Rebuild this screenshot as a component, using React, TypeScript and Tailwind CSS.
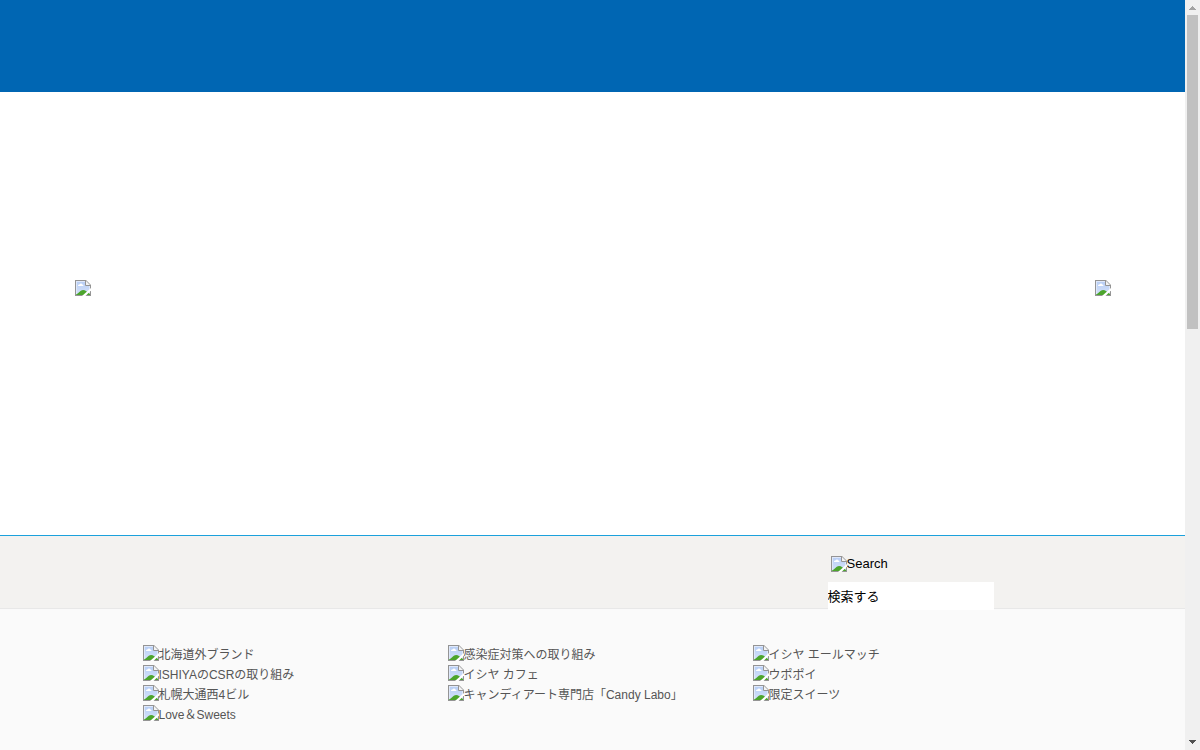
import React from "react";

const columns: string[][] = [
  ["北海道外ブランド", "ISHIYAのCSRの取り組み", "札幌大通西4ビル", "Love＆Sweets"],
  ["感染症対策への取り組み", "イシヤ カフェ", "キャンディアート専門店「Candy Labo」"],
  ["イシヤ エールマッチ", "ウポポイ", "限定スイーツ"],
];

function ImagePlaceholder() {
  return (
    <svg className="size-4 shrink-0" viewBox="0 0 16 16" aria-hidden="true">
      <defs>
        <linearGradient id="sky" x1="0" y1="0" x2="0" y2="1">
          <stop offset="0" stopColor="#b9cff5" />
          <stop offset="1" stopColor="#d3e1fa" />
        </linearGradient>
      </defs>
      <path d="M0 0H11L16 5V16H0Z" fill="#949494" />
      <path d="M1 1H10.5L15 5.5V15H1Z" fill="#dfe8fa" />
      <path d="M2 2H10V6H14V14H2Z" fill="url(#sky)" />
      <path d="M3 6C3 5 3.500 4.500 4.500 4.500C5 3 7 3 7.200 4.500C8 4.500 8.500 5.200 8.500 6Z" fill="#fff" />
      <path d="M1 15V14.500C4 13 5.500 10 8 10C10.500 10 12 12 15 14V15Z" fill="#4ca52c" />
      <path d="M10.500 0.500V5.500H15.500" fill="none" stroke="#949494" />
      <path d="M11 1L15 5H11Z" fill="#f4f4f4" />
      <path d="M16 8V10.500L10.500 16H7Z" fill="#fff" />
    </svg>
  );
}

function ScrollBar() {
  return (
    <div className="sticky top-0 flex h-screen w-[15px] shrink-0 flex-col items-center bg-[#f0f0f0]" aria-hidden="true">
      <svg className="h-[15px] w-[15px] shrink-0" viewBox="0 0 15 15" shapeRendering="crispEdges">
        <path d="M7 6h1v1h1v1h1v1h1v1H4V9h1V8h1V7h1Z" fill="#a3a3a3" />
      </svg>
      <div className="flex w-full flex-1 flex-col px-0.5">
        <div className="h-[314px] w-[11px] bg-[#c1c1c1]" />
      </div>
      <svg className="h-[15px] w-[15px] shrink-0" viewBox="0 0 15 15" shapeRendering="crispEdges">
        <path d="M4 5h7v1h-1v1h-1v1h-1v1h-1v-1h-1v-1h-1v-1h-1Z" fill="#505050" />
      </svg>
    </div>
  );
}

export default function App() {
  return (
    <div className="flex min-h-screen bg-white font-['Liberation_Sans','Noto_Sans_CJK_JP',sans-serif]">
      <div className="flex min-w-0 flex-1 flex-col">
        <header className="h-[92px] bg-[#0066b3]" />

        <section className="flex h-[443px] justify-center px-4 pt-[188px]">
          <div className="flex w-full max-w-[1036px] items-start justify-between">
            <button type="button" aria-label="Previous">
              <ImagePlaceholder />
            </button>
            <button type="button" aria-label="Next">
              <ImagePlaceholder />
            </button>
          </div>
        </section>

        <section className="h-[74px] border-t border-b border-t-[#1ba1dc] border-b-[#e8e8e8] bg-[#f3f2f0]">
          <form
            className="mx-auto flex w-full max-w-[900px] flex-col items-end pt-5 pr-[49px]"
            onSubmit={(e) => e.preventDefault()}
          >
            <div className="flex w-[166px] flex-col gap-2.5">
              <button type="submit" className="ml-[3px] flex h-4 items-center text-[13px] leading-4 text-black">
                <ImagePlaceholder />
                Search
              </button>
              <input
                type="text"
                aria-label="検索"
                defaultValue="検索する"
                className="relative h-7 w-full bg-white pb-0.5 text-[13px] text-black outline-none"
              />
            </div>
          </form>
        </section>

        <footer className="flex-1 bg-[#fafafa] pt-9">
          <div className="mx-auto grid max-w-[900px] grid-cols-[290px_290px_290px] gap-x-[15px]">
            {columns.map((items) => (
              <ul key={items[0]}>
                {items.map((label) => (
                  <li key={label} className="h-5">
                    <a href="#" className="flex h-5 items-start text-xs leading-5 whitespace-nowrap text-[#555555]">
                      <ImagePlaceholder />
                      {label}
                    </a>
                  </li>
                ))}
              </ul>
            ))}
          </div>
        </footer>
      </div>
      <ScrollBar />
    </div>
  );
}
